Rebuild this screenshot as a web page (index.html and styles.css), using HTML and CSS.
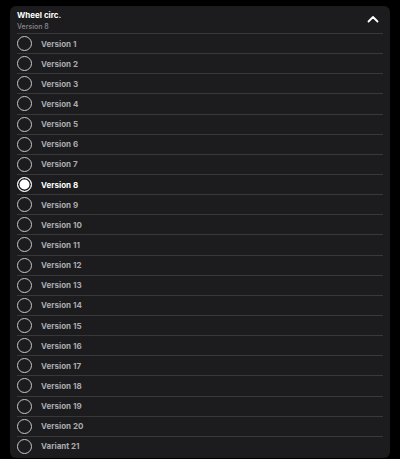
FILE: index.html
```html
<!DOCTYPE html>
<html lang="en">
<head>
    <meta charset="UTF-8">
    <meta name="viewport" content="width=device-width, initial-scale=1.0">
    <title>Wheel circ.</title>
    <link rel="stylesheet" href="styles.css">
</head>
<body>
    <div class="card">
        <div class="card-header">
            <div class="titles">
                <div class="title">Wheel circ.</div>
                <div class="subtitle">Version 8</div>
            </div>
            <svg class="chevron" width="12" height="8" viewBox="0 0 12 8">
                <path d="M1.5 6.5 L6 2 L10.5 6.5" fill="none" stroke="#fff" stroke-width="1.8" stroke-linecap="round" stroke-linejoin="round"/>
            </svg>
        </div>
        <ul class="options">
            <li class="option"><span class="radio"></span>Version 1</li>
            <li class="option"><span class="radio"></span>Version 2</li>
            <li class="option"><span class="radio"></span>Version 3</li>
            <li class="option"><span class="radio"></span>Version 4</li>
            <li class="option"><span class="radio"></span>Version 5</li>
            <li class="option"><span class="radio"></span>Version 6</li>
            <li class="option"><span class="radio"></span>Version 7</li>
            <li class="option selected"><span class="radio"></span>Version 8</li>
            <li class="option"><span class="radio"></span>Version 9</li>
            <li class="option"><span class="radio"></span>Version 10</li>
            <li class="option"><span class="radio"></span>Version 11</li>
            <li class="option"><span class="radio"></span>Version 12</li>
            <li class="option"><span class="radio"></span>Version 13</li>
            <li class="option"><span class="radio"></span>Version 14</li>
            <li class="option"><span class="radio"></span>Version 15</li>
            <li class="option"><span class="radio"></span>Version 16</li>
            <li class="option"><span class="radio"></span>Version 17</li>
            <li class="option"><span class="radio"></span>Version 18</li>
            <li class="option"><span class="radio"></span>Version 19</li>
            <li class="option"><span class="radio"></span>Version 20</li>
            <li class="option"><span class="radio"></span>Variant 21</li>
        </ul>
    </div>
</body>
</html>
```

FILE: styles.css
```css
html, body {
    height: 100%;
}
body {
    margin: 0;
    font-family: 'Inter', 'Liberation Sans', sans-serif;
    background-color: #000000;
    color: #ffffff;
    overflow: hidden;
}

.card {
    margin: 6px 10px 0 10px;
    background: #1c1c1e;
    border-radius: 6px;
    padding: 0 7px 2px 7px;
}

.card-header {
    display: flex;
    justify-content: space-between;
    align-items: center;
    height: 27px;
}
.titles {
    padding-top: 2px;
}
.title {
    font-size: 8px;
    font-weight: 700;
    line-height: 11px;
}
.subtitle {
    font-size: 7px;
    font-weight: 500;
    color: #8a8a8e;
    line-height: 10px;
    margin-top: 1px;
}
.chevron {
    margin-right: 4px;
    margin-top: -2px;
}

.options {
    list-style: none;
    margin: 0;
    padding: 0;
}
.option {
    display: flex;
    align-items: center;
    gap: 9px;
    height: 19.15px;
    border-top: 1px solid #38383a;
    font-size: 8px;
    font-weight: 700;
    color: #ababaf;
}
.radio {
    box-sizing: border-box;
    width: 15px;
    height: 15px;
    border: 1.5px solid #c8c8cc;
    border-radius: 50%;
    flex-shrink: 0;
}
.option.selected {
    color: #ffffff;
}
.option.selected .radio {
    border-color: #ffffff;
    background: #ffffff;
    box-shadow: inset 0 0 0 1.5px #1c1c1e;
}
```
